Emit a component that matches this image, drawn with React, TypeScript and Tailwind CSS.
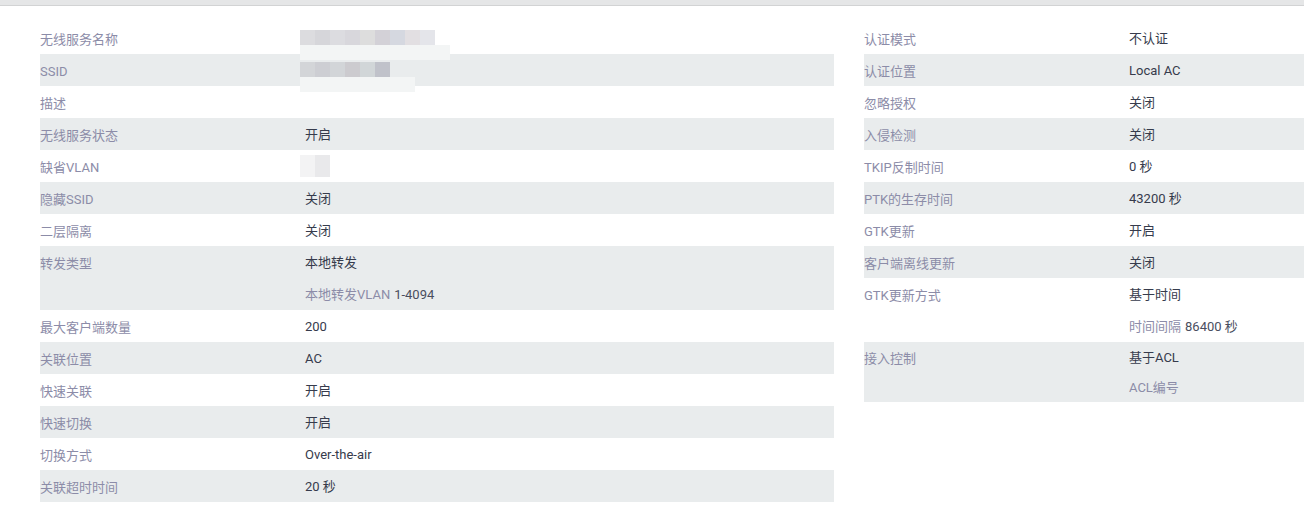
import React from "react";

type Line = { text: string; sub?: string; muted?: boolean };
type Row = { label: string; lines: Line[]; lineH?: string; mask?: "name" | "ssid" | "vlan" };

const leftRows: Row[] = [
  { label: "无线服务名称", lines: [{ text: "" }], mask: "name" },
  { label: "SSID", lines: [{ text: "" }], mask: "ssid" },
  { label: "描述", lines: [{ text: "" }] },
  { label: "无线服务状态", lines: [{ text: "开启" }] },
  { label: "缺省VLAN", lines: [{ text: "" }], mask: "vlan" },
  { label: "隐藏SSID", lines: [{ text: "关闭" }] },
  { label: "二层隔离", lines: [{ text: "关闭" }] },
  {
    label: "转发类型",
    lines: [{ text: "本地转发" }, { text: "本地转发VLAN", sub: "1-4094", muted: true }],
  },
  { label: "最大客户端数量", lines: [{ text: "200" }] },
  { label: "关联位置", lines: [{ text: "AC" }] },
  { label: "快速关联", lines: [{ text: "开启" }] },
  { label: "快速切换", lines: [{ text: "开启" }] },
  { label: "切换方式", lines: [{ text: "Over-the-air" }] },
  { label: "关联超时时间", lines: [{ text: "20 秒" }] },
];

const rightRows: Row[] = [
  { label: "认证模式", lines: [{ text: "不认证" }] },
  { label: "认证位置", lines: [{ text: "Local AC" }] },
  { label: "忽略授权", lines: [{ text: "关闭" }] },
  { label: "入侵检测", lines: [{ text: "关闭" }] },
  { label: "TKIP反制时间", lines: [{ text: "0 秒" }] },
  { label: "PTK的生存时间", lines: [{ text: "43200 秒" }] },
  { label: "GTK更新", lines: [{ text: "开启" }] },
  { label: "客户端离线更新", lines: [{ text: "关闭" }] },
  {
    label: "GTK更新方式",
    lines: [{ text: "基于时间" }, { text: "时间间隔", sub: "86400 秒", muted: true }],
  },
  {
    label: "接入控制",
    lines: [{ text: "基于ACL" }, { text: "ACL编号", muted: true }],
    lineH: "h-[30px]",
  },
];

const nameCells = ["bg-[#dcdcdf]", "bg-[#d6d6da]", "bg-[#dcdce0]", "bg-[#d8d7dc]", "bg-[#dddddd]", "bg-[#d3d1d7]", "bg-[#d5d8e0]", "bg-[#e2dfe2]", "bg-[#e4e5ea]"];
const ssidCells = ["bg-[#d3d5d8]", "bg-[#cdced3]", "bg-[#d2d5d8]", "bg-[#cccbcf]", "bg-[#d1d6d8]", "bg-[#c0c2ca]"];

function Mask({ kind }: { kind: "name" | "ssid" | "vlan" }) {
  if (kind === "vlan") {
    return (
      <div className="absolute left-[-5px] top-[5px] flex">
        <div className="w-[15px] h-[22px] bg-[#f3f3f4]" />
        <div className="w-[15px] h-[22px] bg-[#e9e9eb]" />
      </div>
    );
  }
  const cells = kind === "name" ? nameCells : ssidCells;
  return (
    <div className="absolute left-[-5px] top-[8px]">
      <div className="flex">
        {cells.map((c, i) => (
          <div key={i} className={`w-[15px] h-[15px] ${c}`} />
        ))}
      </div>
      <div
        className={`h-[15px] bg-[#f3f5f5] ${kind === "name" ? "w-[150px]" : "w-[115px]"}`}
      />
    </div>
  );
}

function Table({ rows }: { rows: Row[] }) {
  return (
    <div className="flex flex-col">
      {rows.map((r, i) => (
        <div
          key={r.label}
          className={`flex ${i % 2 === 1 ? "bg-[#e9eced]" : "bg-white"}`}
        >
          <div className={`w-[265px] shrink-0 ${r.lineH ?? "h-[32px]"} pt-[3px] flex items-center text-[#8c8ca8]`}>
            {r.label}
          </div>
          <div className="flex-1 flex flex-col relative">
            {r.mask && <Mask kind={r.mask} />}
            {r.lines.map((l, j) => (
              <div key={j} className={`${r.lineH ?? "h-[32px]"} pt-[2px] flex items-center`}>
                <span className={l.muted ? "text-[#8c8ca8]" : "text-[#363b4c]"}>{l.text}</span>
                {l.sub && <span className="ml-1 text-[#4a4e5e]">{l.sub}</span>}
              </div>
            ))}
          </div>
        </div>
      ))}
    </div>
  );
}

export default function App() {
  return (
    <div
      className="w-[1304px] h-[520px] bg-white overflow-hidden text-[13px]"
      style={{ fontFamily: 'Roboto, "Noto Sans CJK SC", sans-serif' }}
    >
      <div className="h-[6px] bg-[#e5e6e7] border-b border-[#d2d3d4]" />
      <div className="flex pt-[16px] pl-[40px]">
        <div className="w-[794px] shrink-0">
          <Table rows={leftRows} />
        </div>
        <div className="ml-[30px] flex-1">
          <Table rows={rightRows} />
        </div>
      </div>
    </div>
  );
}
